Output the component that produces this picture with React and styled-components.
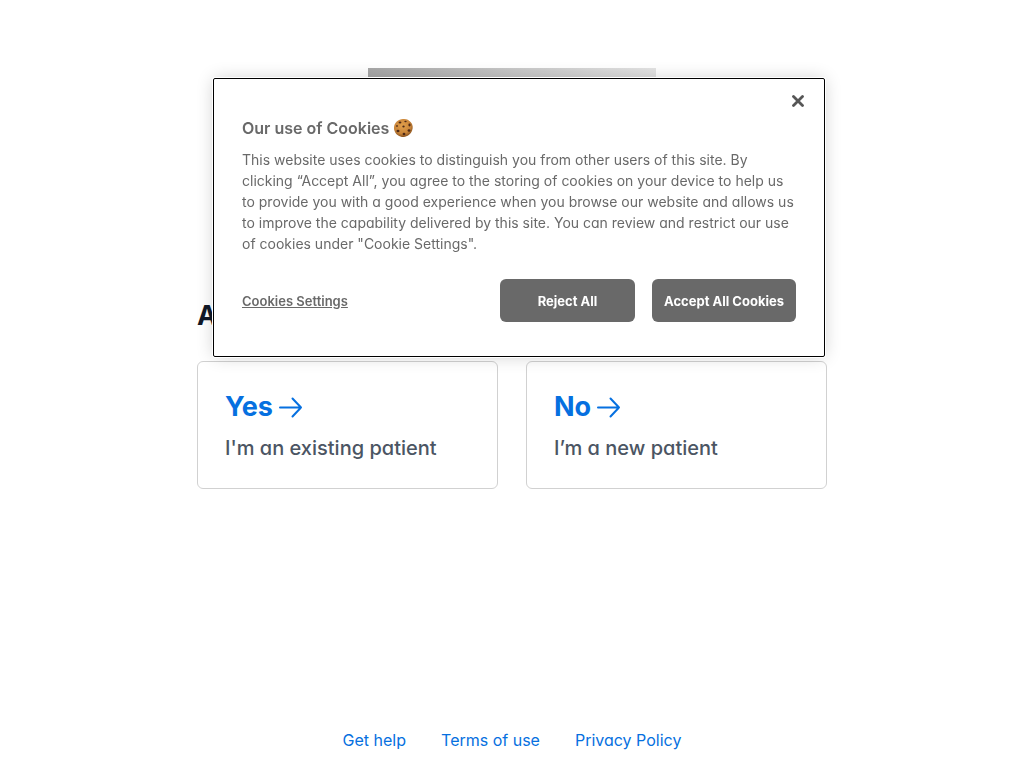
import React, { useState } from 'react'
import styled, { createGlobalStyle } from 'styled-components'

const GlobalStyle = createGlobalStyle`
  * {
    box-sizing: border-box;
  }
  body {
    margin: 0;
    background-color: #fff;
    font-family: Inter, sans-serif;
    font-feature-settings: 'cv11';
  }
`

const Page = styled.div`
  display: flex;
  flex-direction: column;
  min-height: 100vh;
  padding: 68px 24px 16px;
`

const Main = styled.main`
  flex: 1;
  width: 100%;
  max-width: 630px;
  margin: 0 auto;
`

const Logo = styled.div`
  width: 288px;
  height: 144px;
  margin: 0 auto 84px;
  background: linear-gradient(to right, #a8a8a8, #c8c8c8 50%, #e4e4e4);
`

const Question = styled.h1`
  margin: 0 0 25px;
  font-size: 27px;
  font-weight: 700;
  line-height: 40px;
  color: #111827;
`

const Choices = styled.div`
  display: grid;
  grid-template-columns: 1fr 1fr;
  gap: 28px;
  @media (max-width: 600px) {
    grid-template-columns: 1fr;
  }
`

const Card = styled.a`
  padding: 28px 27px 26px;
  border: 1px solid #d1d1d1;
  border-radius: 6px;
  text-decoration: none;
`

const Answer = styled.span`
  display: flex;
  align-items: center;
  gap: 4px;
  font-size: 27px;
  font-weight: 700;
  line-height: 34px;
  color: #0670e0;
`

const Detail = styled.span`
  display: block;
  margin-top: 10px;
  font-size: 20px;
  font-weight: 500;
  line-height: 28px;
  color: #4b5563;
`

const Footer = styled.footer`
  display: flex;
  justify-content: center;
  gap: 35px;
`

const FooterLink = styled.a`
  font-size: 16px;
  line-height: 24px;
  color: #0670e0;
  text-decoration: none;
`

const Dialog = styled.section`
  position: fixed;
  top: 79px;
  left: 214px;
  width: calc(100% - 414px);
  min-width: 320px;
  max-width: 610px;
  padding: 37px 28px 34px;
  border-radius: 1px;
  outline: 1px solid #000;
  background-color: #fff;
  box-shadow: 0 0 0 2px #fff, 0 0 18px rgba(0, 0, 0, 0.2);
  color: #696969;
`

const CloseButton = styled.button`
  position: absolute;
  top: 11px;
  right: 15px;
  display: flex;
  align-items: center;
  justify-content: center;
  width: 22px;
  height: 22px;
  padding: 0;
  border: 0;
  background: none;
  color: #565656;
  cursor: pointer;
`

const DialogTitle = styled.h2`
  display: flex;
  align-items: center;
  gap: 4px;
  margin: 0 0 9px;
  font-size: 16px;
  font-weight: 600;
  line-height: 24px;
`

const DialogText = styled.p`
  margin: 0;
  font-size: 14px;
  line-height: 21px;
`

const Actions = styled.div`
  display: flex;
  align-items: center;
  gap: 17px;
  margin-top: 25px;
`

const SettingsButton = styled.button`
  margin-right: auto;
  padding: 0;
  border: 0;
  background: none;
  font-family: inherit;
  font-size: 13px;
  font-weight: 600;
  line-height: 20px;
  color: #696969;
  text-decoration: underline;
  cursor: pointer;
`

const ConsentButton = styled.button`
  min-width: 135px;
  height: 43px;
  padding: 0 12px;
  border: 0;
  border-radius: 6px;
  background-color: #696969;
  font-family: inherit;
  font-size: 13px;
  font-weight: 700;
  color: #fff;
  cursor: pointer;
`

const Arrow = () => (
  <svg width="28" height="28" viewBox="0 0 28 28" fill="none" stroke="currentColor" strokeWidth="2" strokeLinecap="round" strokeLinejoin="round" aria-hidden="true">
    <path d="M3 14.500h21M15.500 5.500l8.500 9-8.500 9" />
  </svg>
)

const Cross = () => (
  <svg width="12" height="12" viewBox="0 0 12 12" stroke="currentColor" strokeWidth="2.800" strokeLinecap="round" aria-hidden="true">
    <path d="M1.500 1.500l9 9M10.500 1.500l-9 9" />
  </svg>
)

const Cookie = () => (
  <svg width="21" height="20" viewBox="0 0 21 20" role="img" aria-label="cookie">
    <defs>
      <radialGradient id="dough" cx="45%" cy="38%" r="62%">
        <stop offset="0" stopColor="#e2a04c" />
        <stop offset="0.700" stopColor="#c98539" />
        <stop offset="1" stopColor="#8c5420" />
      </radialGradient>
    </defs>
    <path d="M10 1c3-.4 6 .8 7.800 3.200 2 2.300 2.500 5.300 1.300 8.300-1.200 3.500-4.700 6.300-8.300 6.400-4 .2-8-2.400-9.200-6C.3 9.500 1.300 5.600 3.800 3.400 5.500 1.900 7.800 1.100 10 1z" fill="url(#dough)" />
    <g fill="#4d2917">
      <ellipse cx="7" cy="4.500" rx="1.400" ry="1" />
      <ellipse cx="12.500" cy="3.500" rx="1.200" ry=".8" />
      <ellipse cx="16.500" cy="7" rx="1.100" ry="1.400" />
      <ellipse cx="10.500" cy="8.500" rx="1.200" ry=".9" />
      <ellipse cx="4" cy="8" rx=".8" ry="1.100" />
      <ellipse cx="5" cy="13" rx="1.500" ry="1.200" />
      <ellipse cx="11" cy="16" rx="1.400" ry="1.300" />
      <ellipse cx="16" cy="12.500" rx="1.400" ry="1.300" />
    </g>
  </svg>
)

const choices = [
  { answer: 'Yes', detail: "I'm an existing patient" },
  { answer: 'No', detail: 'I’m a new patient' }
]

const links = ['Get help', 'Terms of use', 'Privacy Policy']

const CookieDialog = ({ onClose }) => (
  <Dialog role="dialog" aria-labelledby="cookie-title">
    <CloseButton type="button" aria-label="Close" onClick={onClose}>
      <Cross />
    </CloseButton>
    <DialogTitle id="cookie-title">
      Our use of Cookies
      <Cookie />
    </DialogTitle>
    <DialogText>
      This website uses cookies to distinguish you from other users of this site. By clicking “Accept
      All”, you agree to the storing of cookies on your device to help us to provide you with a good
      experience when you browse our website and allows us to improve the capability delivered by this
      site. You can review and restrict our use of cookies under "Cookie Settings".
    </DialogText>
    <Actions>
      <SettingsButton type="button">Cookies Settings</SettingsButton>
      <ConsentButton type="button" onClick={onClose}>Reject All</ConsentButton>
      <ConsentButton type="button" onClick={onClose}>Accept All Cookies</ConsentButton>
    </Actions>
  </Dialog>
)

const App = () => {
  const [open, setOpen] = useState(true)

  return (
    <>
      <GlobalStyle />
      <Page>
        <Main>
          <Logo />
          <Question>Are you an existing patient?</Question>
          <Choices>
            {choices.map(({ answer, detail }) => (
              <Card href="#" key={answer}>
                <Answer>
                  {answer}
                  <Arrow />
                </Answer>
                <Detail>{detail}</Detail>
              </Card>
            ))}
          </Choices>
        </Main>
        <Footer>
          {links.map(link => (
            <FooterLink href="#" key={link}>{link}</FooterLink>
          ))}
        </Footer>
      </Page>
      {open && <CookieDialog onClose={() => setOpen(false)} />}
    </>
  )
}

export default App
